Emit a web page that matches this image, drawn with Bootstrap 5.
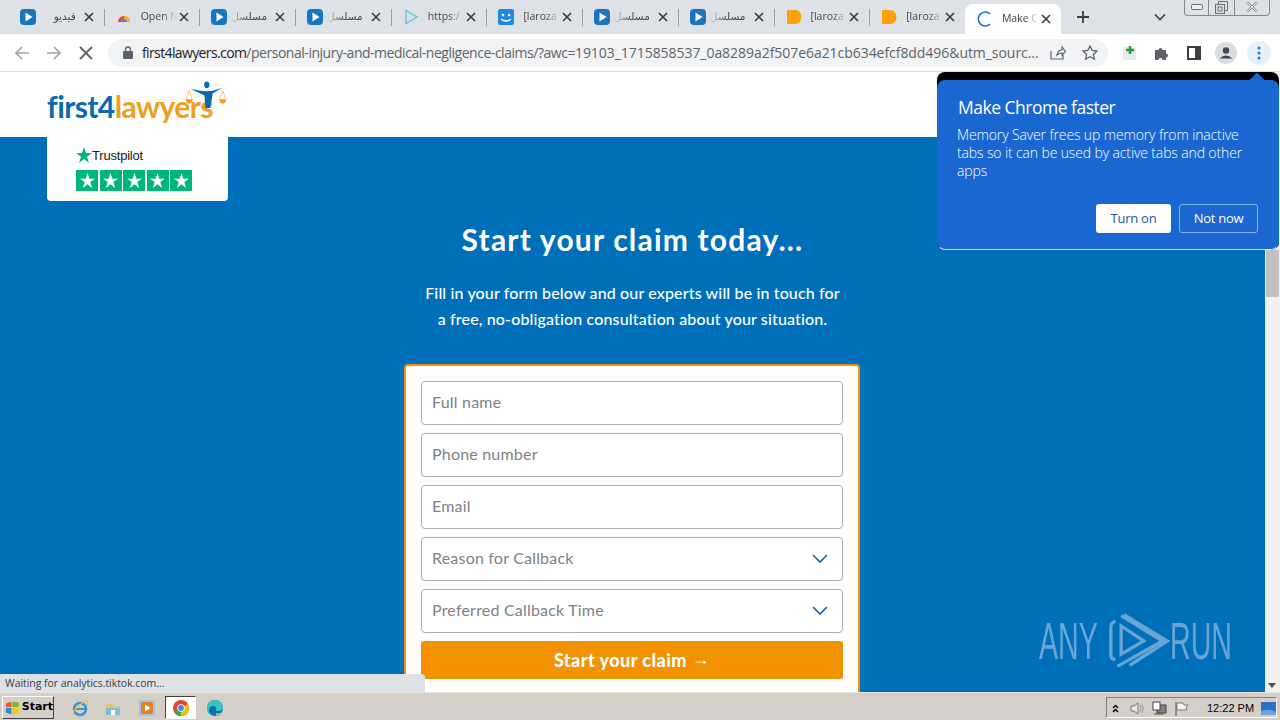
<!DOCTYPE html>
<html lang="en">
<head>
  <meta charset="utf-8">
  <title>Make Chrome faster</title>
  <link href="https://cdn.jsdelivr.net/npm/bootstrap@5.3.0/dist/css/bootstrap.min.css" rel="stylesheet">
  <style>
    html, body { width: 1280px; height: 720px; overflow: hidden; }
    body { font-family: "Open Sans", "DejaVu Sans", sans-serif; background: #d4d0c8; position: relative; }

    /* browser chrome */
    .tabstrip { height: 34px; background: #dee1e6; padding-left: 8px; position: relative; }
    .tab-item { width: 95.7px; height: 34px; padding: 0 8px 0 12px; position: relative; font-size: 10.5px; color: #45494e; flex: none; }
    .tab-item + .tab-item::before { content: ""; position: absolute; left: 0; top: 9px; height: 17px; width: 1px; background: #9aa0a6; }
    .tab-ico { width: 16px; height: 16px; flex: none; }
    .tab-title { flex: 1; margin: 0 2px 0 9px; white-space: nowrap; overflow: hidden; -webkit-mask-image: linear-gradient(90deg, #000 60%, transparent 100%); mask-image: linear-gradient(90deg, #000 60%, transparent 100%); }
    .tab-rtl { margin: 0 8px 0 3px; -webkit-mask-image: linear-gradient(270deg, #000 50%, transparent 100%); mask-image: linear-gradient(270deg, #000 50%, transparent 100%); }
    .tab-x { width: 10px; height: 10px; flex: none; margin-right: 2px; }
    .tab-now { background: #fff; border-radius: 8px 8px 0 0; height: 30px; margin-top: 4px; color: #3c4043; }
    .tab-now::before { display: none; }
    .tab-add { margin-left: 15px; width: 14px; height: 14px; }
    .tab-list { margin-left: 64px; width: 12px; height: 8px; }
    .win-btns { position: absolute; left: 1184px; top: -1px; width: 86px; height: 17px; border: 1px solid #84878c; border-top: 0; border-radius: 0 0 4px 4px; }
    .win-btns > div { height: 100%; border-right: 1px solid #84878c; }
    .win-btns > div:nth-child(1) { width: 24px; }
    .win-btns > div:nth-child(2) { width: 26px; }
    .win-btns > div:nth-child(3) { flex: 1; border-right: 0; }

    .toolbar { height: 38px; background: #fff; border-bottom: 1px solid #d9dbde; padding: 0 0 0 14px; }
    .nav-ico { width: 16px; height: 16px; flex: none; }
    .omnibox { width: 1000px; height: 28px; margin-left: 14px; background: #f1f3f4; border-radius: 14px; padding: 0 10px 0 11px; flex: none; font-family: "Open Sans", sans-serif; font-size: 14px; color: #5f6368; }
    .url-host { color: #202124; letter-spacing: -.62px; }
    .url-path { letter-spacing: -.47px; }
    .url-query { letter-spacing: -.05px; }
    .url-text { flex: 1; white-space: nowrap; overflow: hidden; margin: 0 10px 0 9px; }
    .ext-row { width: 172px; flex: none; padding-left: 14px; gap: 16px; }
    .ext-ico { width: 16px; height: 16px; flex: none; }
    .ext-menu { width: 24px; height: 24px; border-radius: 50%; background: #e8f0fe; margin-left: -3px; flex: none; }
    .profile-ico { margin: 0 -3px; }

    /* page */
    .page-wrap { height: 620px; position: relative; }
    .page-col { width: 1265px; flex: none; }
    .site-head { height: 65px; background: #fff; padding: 9px 0 0 47px; }
    .site-logo { position: relative; width: 182px; height: 46px; }
    .logo-word { position: absolute; left: 0; top: 7px; font-family: Lato, sans-serif; font-weight: 700; font-size: 30px; letter-spacing: -.6px; line-height: 36px; white-space: nowrap; }
    .logo-a { color: #0a6ab0; }
    .logo-b { color: #f0a020; }
    .logo-fig { position: absolute; left: 136px; top: 0; width: 46px; height: 27px; }
    .site-main { height: 555px; background: #006fba; overflow: hidden; }
    .tp-card { width: 181px; height: 64px; margin-left: 47px; background: #fff; border-radius: 0 0 4px 4px; padding: 8px 0 0 29px; }
    .tp-name { font-family: "Liberation Sans", sans-serif; font-size: 13px; color: #191919; letter-spacing: -.2px; line-height: 18px; padding-top: 2px; }
    .tp-box { width: 22px; height: 21px; background: #00b67a; display: flex; align-items: center; justify-content: center; }
    .tp-stars { gap: 1.5px; margin-top: 5px; }
    .claim-title { font-family: Lato, sans-serif; font-weight: 700; font-size: 30px; line-height: 40px; color: #fff; text-align: center; margin: 18px 0 0; letter-spacing: 1.2px; }
    .claim-lead { font-family: Lato, sans-serif; font-weight: 500; font-size: 16px; line-height: 26px; color: #fff; text-align: center; margin: 21px 0 0; letter-spacing: .14px; }
    .claim-box { width: 456px; margin: 32px 0 0 404px; background: #fff; border: 2px solid #f39200; border-radius: 4px; padding: 15px 15px 0; height: 340px; }
    .claim-box .form-control, .claim-box .form-select { height: 44px; margin-bottom: 8px; border: 1px solid #a9abae; border-radius: 4px; padding: 0 10px 2px; font-family: Lato, sans-serif; font-size: 16px; letter-spacing: .2px; color: #808285; box-shadow: none; }
    .claim-box .form-control { padding-bottom: 4px; }
    .claim-box .form-control::placeholder { color: #808285; opacity: 1; }
    .claim-box .form-select { background-image: url("data:image/svg+xml,%3csvg xmlns='http://www.w3.org/2000/svg' viewBox='0 0 16 10'%3e%3cpath fill='none' stroke='%230a6ab0' stroke-width='1.6' d='M1 1l7 7 7-7'/%3e%3c/svg%3e"); background-size: 16px 10px; background-position: right 14px center; }
    .claim-btn { height: 38px; background: #f39200; border: 0; border-radius: 3px; color: #fff; font-family: Lato, sans-serif; font-weight: 900; font-size: 18px; letter-spacing: .45px; padding: 0; }
    .btn-arrow { font-family: "Liberation Sans", sans-serif; font-weight: 400; font-size: 18px; vertical-align: 2px; }
    .page-scroll { width: 15px; flex: none; background: #f1f1f1; position: relative; }
    .scroll-thumb { position: absolute; left: 1px; right: 1px; top: 178px; height: 47px; background: #c1c1c1; }
    .scroll-down { position: absolute; left: 3px; bottom: 4px; width: 0; height: 0; border: 4.5px solid transparent; border-top: 5px solid #505050; border-bottom: 0; }

    /* things lying over the page */
    .mem-pop { position: absolute; left: 937px; top: 0; width: 342px; height: 178px; background: #000; border-radius: 8px; }
    .mem-body { position: absolute; left: 0; right: 0; top: 8px; bottom: 0; background: #1a67d2; border: 1px solid #1a67d2; border-bottom-color: #d8e6f8; border-radius: 8px; padding: 14px 20px 0; color: #fff; }
    .mem-tip { position: absolute; right: 13px; top: -8px; width: 16px; height: 16px; background: #1a67d2; transform: rotate(45deg) scale(.75); }
    .mem-title { font-family: "Open Sans", sans-serif; font-size: 17.5px; line-height: 24px; font-weight: 500; letter-spacing: -.5px; margin: 0; }
    .mem-text { font-family: "Open Sans", sans-serif; font-weight: 300; font-size: 14px; line-height: 18px; letter-spacing: -.13px; margin: 7px 0 0 -1px; }
    .mem-btn { height: 29px; border-radius: 3px; font-size: 13px; letter-spacing: -.25px; padding: 0; display: flex; align-items: center; justify-content: center; font-family: "Open Sans", sans-serif; }
    .mem-on { width: 75px; background: #fff; color: #1a56a8; border: 0; }
    .mem-off { width: 79px; background: transparent; color: #fff; border: 1px solid #8ab4f0; }
    .mem-acts { position: absolute; right: 20px; top: 123px; gap: 8px; }
    .status-bubble { position: absolute; left: 0; bottom: 0; width: 425px; height: 18px; background: #dee1e6; border-radius: 0 4px 0 0; font-size: 10.5px; line-height: 19px; padding-left: 5px; color: #3c4043; letter-spacing: -.05px; white-space: nowrap; }
    .anyrun { position: absolute; left: 1039px; top: 538px; color: #6fa8d6; display: flex; align-items: center; opacity: .95; }
    .anyrun span { font-family: "Liberation Sans", sans-serif; font-size: 52px; line-height: 62px; display: inline-block; transform: scaleX(.55); transform-origin: left center; width: 69px; flex: none; white-space: nowrap; }

    /* windows taskbar */
    .taskbar { height: 28px; background: #d4d0c8; border-top: 1px solid #e9e6df; position: relative; }
    .start-btn { position: absolute; left: 2px; top: 3px; width: 52px; height: 23px; background: #d4d0c8; border: 1px solid; border-color: #fff #404040 #404040 #fff; font-family: "DejaVu Sans", sans-serif; font-weight: 700; font-size: 11px; color: #000; gap: 2px; padding-left: 2px; }
    .task-ico { position: absolute; top: 6px; width: 18px; height: 18px; }
    .task-now { position: absolute; left: 165px; top: 3px; width: 31px; height: 23px; background: #fff; border: 1px solid; border-color: #404040 #fff #fff #404040; }
    .tray-box { position: absolute; left: 1106px; top: 4px; width: 171px; height: 21px; border: 1px solid; border-color: #808080 #fff #fff #808080; font-family: "Liberation Sans", sans-serif; font-size: 11px; color: #000; }
    .tray-ico { position: absolute; top: 3px; width: 15px; height: 15px; }
    .tray-time { position: absolute; left: 100px; top: 2px; line-height: 16px; white-space: nowrap; }
    .ico-ie { left: 71px; } .ico-files { left: 104px; } .ico-media { left: 138px; } .ico-chrome { left: 172px; } .ico-edge { left: 206px; }
    .tray-a { left: 1px; } .tray-b { left: 22px; } .tray-c { left: 45px; } .tray-d { left: 67px; } .tray-e { left: 154px; }
  </style>
</head>
<body>
  <svg width="0" height="0" class="position-absolute">
    <symbol id="i-play" viewBox="0 0 16 16"><rect width="16" height="16" rx="4" fill="#1a74c4"/><path d="M5.5 3.5v9l7-4.5z" fill="#fff"/></symbol>
    <symbol id="i-x" viewBox="0 0 10 10"><path d="M1 1l8 8M9 1l-8 8" stroke="#3c4043" stroke-width="1.7"/></symbol>
    <symbol id="i-blob" viewBox="0 0 16 16"><path d="M1 1h8a6.5 7 0 0 1 0 14H1z" fill="#ff9f0a"/></symbol>
    <symbol id="i-star" viewBox="0 0 16 16"><path d="M8 0l2 6h6l-5 3.700L13 16 8 12l-5 4 2-6.300L0 6h6z"/></symbol>
  </svg>

  <!-- tabs -->
  <div class="tabstrip d-flex align-items-center">
    <div class="tab-item d-flex align-items-center"><svg class="tab-ico"><use href="#i-play"/></svg><div class="tab-title tab-rtl" dir="rtl">فيديو</div><svg class="tab-x"><use href="#i-x"/></svg></div>
    <div class="tab-item d-flex align-items-center"><svg class="tab-ico" viewBox="0 0 16 16"><path d="M2 13a6 6 0 0 1 12 0h-3a3 3 0 0 0-6 0z" fill="#ea4335"/><path d="M5 13a3 3 0 0 1 6 0z" fill="#4285f4"/><path d="M8 7a6 6 0 0 1 6 6h-3a3 3 0 0 0-3-3z" fill="#fbbc05"/></svg><div class="tab-title">Open N</div><svg class="tab-x"><use href="#i-x"/></svg></div>
    <div class="tab-item d-flex align-items-center"><svg class="tab-ico"><use href="#i-play"/></svg><div class="tab-title tab-rtl" dir="rtl">مسلسل</div><svg class="tab-x"><use href="#i-x"/></svg></div>
    <div class="tab-item d-flex align-items-center"><svg class="tab-ico"><use href="#i-play"/></svg><div class="tab-title tab-rtl" dir="rtl">مسلسل</div><svg class="tab-x"><use href="#i-x"/></svg></div>
    <div class="tab-item d-flex align-items-center"><svg class="tab-ico" viewBox="0 0 16 16"><path d="M3 1.5v13l11-6.500z" fill="none" stroke="#5cc4e6" stroke-width="1.3"/></svg><div class="tab-title">https:/</div><svg class="tab-x"><use href="#i-x"/></svg></div>
    <div class="tab-item d-flex align-items-center"><svg class="tab-ico" viewBox="0 0 16 16"><rect width="16" height="16" rx="2" fill="#1e88e5"/><circle cx="5" cy="6" r="1.3" fill="#fff"/><circle cx="11" cy="6" r="1.3" fill="#fff"/><path d="M3 10q5 4 10 0" fill="none" stroke="#fff" stroke-width="1.4"/></svg><div class="tab-title">[laroza</div><svg class="tab-x"><use href="#i-x"/></svg></div>
    <div class="tab-item d-flex align-items-center"><svg class="tab-ico"><use href="#i-play"/></svg><div class="tab-title tab-rtl" dir="rtl">مسلسل</div><svg class="tab-x"><use href="#i-x"/></svg></div>
    <div class="tab-item d-flex align-items-center"><svg class="tab-ico"><use href="#i-play"/></svg><div class="tab-title tab-rtl" dir="rtl">مسلسل</div><svg class="tab-x"><use href="#i-x"/></svg></div>
    <div class="tab-item d-flex align-items-center"><svg class="tab-ico"><use href="#i-blob"/></svg><div class="tab-title">[laroza</div><svg class="tab-x"><use href="#i-x"/></svg></div>
    <div class="tab-item d-flex align-items-center"><svg class="tab-ico"><use href="#i-blob"/></svg><div class="tab-title">[laroza</div><svg class="tab-x"><use href="#i-x"/></svg></div>
    <div class="tab-item tab-now d-flex align-items-center"><svg class="tab-ico" viewBox="0 0 16 16"><path d="M13 2.8A7 7 0 1 0 13 13.2" fill="none" stroke="#1a73e8" stroke-width="1.6"/></svg><div class="tab-title">Make C</div><svg class="tab-x"><use href="#i-x"/></svg></div>
    <svg class="tab-add" viewBox="0 0 14 14"><path d="M7 1v12M1 7h12" stroke="#3c4043" stroke-width="1.8"/></svg>
    <svg class="tab-list" viewBox="0 0 12 8"><path d="M1 1.5l5 5 5-5" fill="none" stroke="#3c4043" stroke-width="1.7"/></svg>
    <div class="win-btns d-flex">
      <div class="d-flex align-items-center justify-content-center"><svg width="12" height="6" viewBox="0 0 12 6"><rect x=".5" y=".5" width="11" height="5" rx="1" fill="#eee" stroke="#6b6e72"/></svg></div>
      <div class="d-flex align-items-center justify-content-center"><svg width="13" height="13" viewBox="0 0 13 13"><path d="M3.5 3V.5h9v9H10" fill="none" stroke="#6b6e72"/><rect x=".5" y="3.5" width="9" height="9" fill="none" stroke="#6b6e72"/><rect x="3" y="6" width="4" height="4" fill="none" stroke="#6b6e72"/></svg></div>
      <div class="d-flex align-items-center justify-content-center"><svg width="12" height="12" viewBox="0 0 12 12"><path d="M1 1l10 10M11 1L1 11" stroke="#8a8d91" stroke-width="2.4"/><path d="M1 1l10 10M11 1L1 11" stroke="#eee" stroke-width="1"/></svg></div>
    </div>
  </div>

  <!-- toolbar -->
  <div class="toolbar d-flex align-items-center">
    <svg class="nav-ico" viewBox="0 0 16 16"><path d="M15 8H2M8 2L2 8l6 6" fill="none" stroke="#a3a6aa" stroke-width="1.7"/></svg>
    <svg class="nav-ico ms-3" viewBox="0 0 16 16"><path d="M1 8h13M8 2l6 6-6 6" fill="none" stroke="#a3a6aa" stroke-width="1.7"/></svg>
    <svg class="nav-ico ms-3" viewBox="0 0 16 16"><path d="M2 2l12 12M14 2L2 14" stroke="#5f6368" stroke-width="1.8"/></svg>
    <div class="omnibox d-flex align-items-center">
      <svg width="10" height="13" viewBox="0 0 10 13" class="flex-none ms-1"><path d="M2.5 6V3.5a2.5 2.5 0 0 1 5 0V6" fill="none" stroke="#5f6368" stroke-width="1.3"/><rect y="5" width="10" height="8" rx="1" fill="#5f6368"/></svg>
      <div class="url-text"><span class="url-host">first4lawyers.com</span><span class="url-path">/personal-injury-and-medical-negligence-claims/?awc=</span><span class="url-query">19103_1715858537_0a8289a2f507e6a21cb634efcf8dd496&amp;utm_sourc...</span></div>
      <svg width="16" height="14" viewBox="0 0 16 14" class="flex-none"><path d="M1 5v8h12V9M7 9q1-5 5-5V1l3.500 4.500L12 9V7q-3 0-5 2z" fill="none" stroke="#5f6368" stroke-width="1.2"/></svg>
      <svg width="16" height="15" viewBox="0 0 16 15" class="flex-none ms-3"><path d="M8 1l2.100 4.500 4.900.6-3.600 3.300 1 4.800L8 11.800l-4.400 2.400 1-4.800L1 6.100l4.900-.6z" fill="none" stroke="#5f6368" stroke-width="1.3"/></svg>
    </div>
    <div class="ext-row d-flex align-items-center">
      <svg class="ext-ico" viewBox="0 0 16 16"><rect x="1" y="2" width="13" height="13" rx="3" fill="#e8eaed"/><path d="M8 1v8M4 5h8" stroke="#1e9e3e" stroke-width="2.4"/></svg>
      <svg class="ext-ico" viewBox="0 0 16 16"><path d="M1 5h3.500a2 2 0 1 1 4 0H12v3.500a2 2 0 1 1 0 4V15H8.500a2 2 0 1 0-4 0H1z" fill="#5f6368"/></svg>
      <svg class="ext-ico" viewBox="0 0 16 16"><path d="M2 2h12v12H2z" fill="none" stroke="#3c4043" stroke-width="2"/><path d="M9 2h5v12H9z" fill="#3c4043"/></svg>
      <svg class="profile-ico flex-none" width="22" height="22" viewBox="0 0 22 22"><circle cx="11" cy="11" r="11" fill="#dadce0"/><circle cx="11" cy="8.500" r="3.200" fill="#3f4a5a"/><path d="M4.500 16.500q6.500-6 13 0z" fill="#3f4a5a"/></svg>
      <div class="ext-menu d-flex align-items-center justify-content-center"><svg width="4" height="14" viewBox="0 0 4 14"><circle cx="2" cy="2" r="1.5" fill="#1a73e8"/><circle cx="2" cy="7" r="1.5" fill="#1a73e8"/><circle cx="2" cy="12" r="1.5" fill="#1a73e8"/></svg></div>
    </div>
  </div>

  <!-- page -->
  <div class="page-wrap d-flex">
    <div class="page-col">
      <div class="site-head">
        <div class="site-logo">
          <div class="logo-word"><span class="logo-a">first4</span><span class="logo-b">lawyers</span></div>
          <svg class="logo-fig" viewBox="0 0 62 28" preserveAspectRatio="none"><circle cx="32" cy="4" r="3.500" fill="#0a6ab0"/><path d="M10 8l14 2q8 1 16 0l13-3-13 6-3 15h-7l-1-13z" fill="#0a6ab0"/><path d="M4 19a4.500 4.500 0 0 0 9 0zM49 19a4.500 4.500 0 0 0 9 0z" fill="#f0a020"/><path d="M8.500 10L4.500 19M8.500 10l4 9M53.500 10l-4 9M53.500 10l4 9" stroke="#f0a020" stroke-width=".7"/></svg>
        </div>
      </div>
      <div class="site-main">
        <div class="tp-card">
          <div class="d-flex align-items-center">
            <svg width="16" height="16" fill="#00b67a"><use href="#i-star"/></svg>
            <span class="tp-name">Trustpilot</span>
          </div>
          <div class="tp-stars d-flex">
            <div class="tp-box"><svg width="15" height="15" fill="#fff"><use href="#i-star"/></svg></div>
            <div class="tp-box"><svg width="15" height="15" fill="#fff"><use href="#i-star"/></svg></div>
            <div class="tp-box"><svg width="15" height="15" fill="#fff"><use href="#i-star"/></svg></div>
            <div class="tp-box"><svg width="15" height="15" fill="#fff"><use href="#i-star"/></svg></div>
            <div class="tp-box"><svg width="15" height="15" fill="#fff"><use href="#i-star"/></svg></div>
          </div>
        </div>
        <h1 class="claim-title">Start your claim today...</h1>
        <p class="claim-lead">Fill in your form below and our experts will be in touch for<br>a free, no-obligation consultation about your situation.</p>
        <form class="claim-box">
          <input type="text" class="form-control" placeholder="Full name">
          <input type="text" class="form-control" placeholder="Phone number">
          <input type="text" class="form-control" placeholder="Email">
          <select class="form-select"><option>Reason for Callback</option></select>
          <select class="form-select"><option>Preferred Callback Time</option></select>
          <button type="button" class="btn claim-btn w-100">Start your claim <span class="btn-arrow">→</span></button>
        </form>
      </div>
    </div>
    <div class="page-scroll"><div class="scroll-thumb"></div><div class="scroll-down"></div></div>

    <div class="mem-pop">
      <div class="mem-body">
        <div class="mem-tip"></div>
        <h2 class="mem-title">Make Chrome faster</h2>
        <p class="mem-text">Memory Saver frees up memory from inactive tabs so it can be used by active tabs and other apps</p>
        <div class="mem-acts d-flex">
          <button type="button" class="btn mem-btn mem-on">Turn on</button>
          <button type="button" class="btn mem-btn mem-off">Not now</button>
        </div>
      </div>
    </div>

    <div class="anyrun">
      <span>ANY</span>
      <svg width="62" height="62" viewBox="0 0 66 62" class="flex-none"><path d="M8 10Q3 11 3 16v30q0 5 5 4M17 3l46 28-40 26" fill="none" stroke="#6fa8d6" stroke-width="3.5"/><path d="M10 58l48-27L14 4M14 15v30l24-14z" fill="none" stroke="#6fa8d6" stroke-width="3.5"/></svg>
      <span>RUN</span>
    </div>

    <div class="status-bubble">Waiting for analytics.tiktok.com...</div>
  </div>

  <!-- taskbar -->
  <div class="taskbar">
    <div class="start-btn d-flex align-items-center">
      <svg width="16" height="16" viewBox="0 0 16 16" class="flex-none"><path d="M1 3l6-2v6H1z" fill="#e8562a"/><path d="M8 1l7 1v5H8z" fill="#7cb82f"/><path d="M1 8h6v7l-6-2z" fill="#2f8bd8"/><path d="M8 8h7v6l-7 1z" fill="#f7c325"/></svg>
      <span>Start</span>
    </div>
    <svg class="task-ico ico-ie" viewBox="0 0 18 18"><circle cx="9" cy="10" r="6" fill="none" stroke="#3a92d8" stroke-width="2.5"/><path d="M3 10h12" stroke="#3a92d8" stroke-width="2"/><path d="M2 17Q0 12 14 2q4-1 2 4" fill="none" stroke="#f3c33c" stroke-width="1.2"/></svg>
    <svg class="task-ico ico-files" viewBox="0 0 18 18"><path d="M2 5h6l1 2h7v9H2z" fill="#e8c66a"/><path d="M2 9h14v7H2z" fill="#7ec0dc"/><rect x="7" y="11" width="4" height="5" fill="#fff"/></svg>
    <svg class="task-ico ico-media" viewBox="0 0 18 18"><rect x="1" y="1" width="16" height="16" fill="#9cc4e4"/><rect x="3" y="3" width="12" height="12" rx="2" fill="#e8801f"/><path d="M7 5.500v7l5.500-3.500z" fill="#fff"/></svg>
    <div class="task-now"></div>
    <svg class="task-ico ico-chrome" viewBox="0 0 18 18"><circle cx="9" cy="9" r="8" fill="#ea4335"/><path d="M9 9L2 13a8 8 0 0 0 7 4z" fill="#34a853"/><path d="M9 9l7-4a8 8 0 0 1-7 12z" fill="#fbbc05"/><circle cx="9" cy="9" r="3.800" fill="#fff"/><circle cx="9" cy="9" r="2.900" fill="#4285f4"/></svg>
    <svg class="task-ico ico-edge" viewBox="0 0 18 18"><circle cx="9" cy="9" r="8" fill="#0f6cbd"/><path d="M1 9a8 8 0 0 1 16 0q0 3-5 3-3 0-2-2 1-3-3-3-4 0-4 5 0 4 5 4-7 1-7-7z" fill="#34c6c0"/><path d="M10 17q5-1 6-4-2 2-6 1z" fill="#7fd84b"/></svg>
    <div class="tray-box">
      <svg class="tray-ico tray-a" viewBox="0 0 15 15"><path d="M5 7l2.500-2.500L10 7M5 11l2.500-2.500L10 11" fill="none" stroke="#000" stroke-width="1.4"/></svg>
      <svg class="tray-ico tray-b" viewBox="0 0 15 15"><path d="M2 5h3l4-3v11l-4-3H2z" fill="#e8e8e8" stroke="#777"/><path d="M11 4q2 3.500 0 7M13 3q2.500 4.500 0 9" fill="none" stroke="#999"/></svg>
      <svg class="tray-ico tray-c" viewBox="0 0 15 15"><rect x="5" y="4" width="9" height="8" fill="#808080" stroke="#444"/><rect x="1" y="1" width="7" height="8" fill="#fff" stroke="#444"/><path d="M2 13h10" stroke="#444"/></svg>
      <svg class="tray-ico tray-d" viewBox="0 0 15 15"><path d="M2 1v14" stroke="#666" stroke-width="1.2"/><path d="M3 2h6l1 2h4l-2 3 1 2H3z" fill="#f4f4f4" stroke="#777"/></svg>
      <div class="tray-time">12:22 PM</div>
      <svg class="tray-ico tray-e" viewBox="0 0 15 15"><rect y="1" width="15" height="13" fill="#2a70c8"/><path d="M0 10q8-3 15 1v3H0z" fill="#6aa4dc"/></svg>
    </div>
  </div>
</body>
</html>
